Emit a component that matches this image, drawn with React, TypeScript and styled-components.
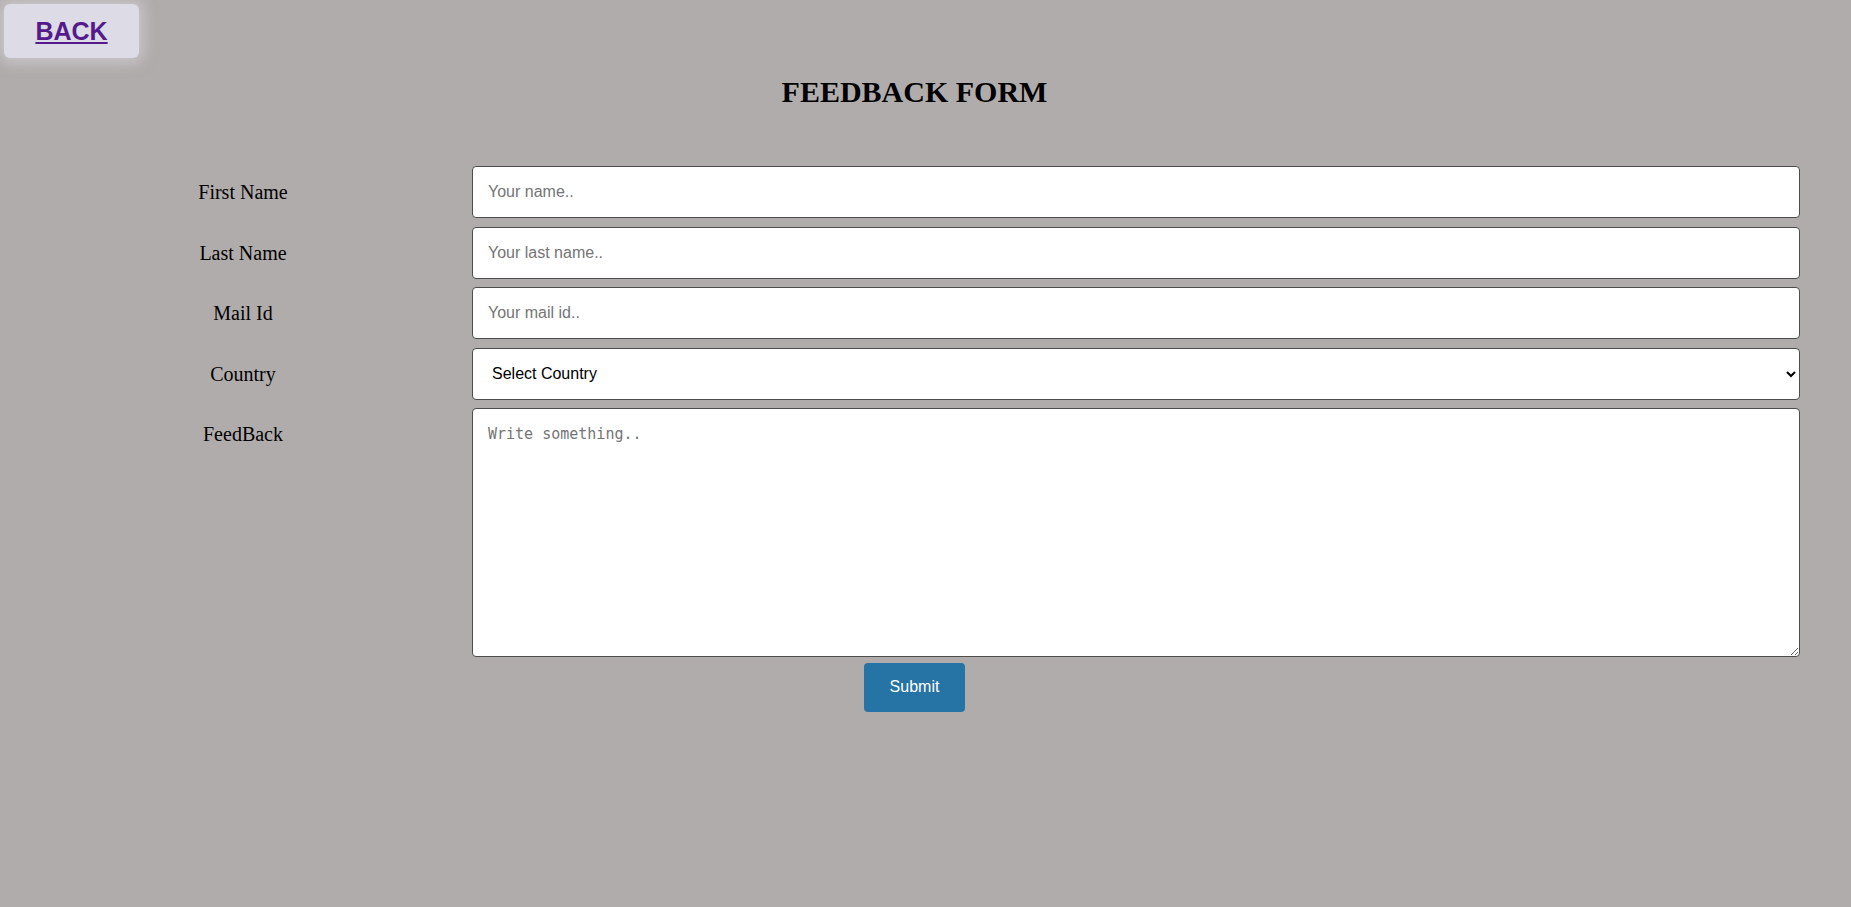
import styled, { createGlobalStyle } from 'styled-components';

const GlobalStyle = createGlobalStyle`
  html {
    overflow-y: scroll;
  }
  html, body {
    margin: 0;
    background: #b1acac;
  }
  body {
    font-family: "Liberation Serif", "Times New Roman", serif;
  }
  ::-webkit-scrollbar {
    width: 15px;
    background: #fff;
  }
  ::-webkit-scrollbar-track {
    background: #fff;
  }
  ::-webkit-scrollbar-thumb {
    background: #8b8b8b;
    border: 2px solid #fff;
    border-right-width: 1px;
    border-radius: 8px;
  }
  ::-webkit-scrollbar-button:single-button:vertical:decrement {
    height: 19px;
    background-color: #fff;
    background-image: conic-gradient(from 146deg at 50% 0, #8b8b8b 68deg, transparent 0);
    background-size: 11px 8px;
    background-position: 6px 5px;
    background-repeat: no-repeat;
  }
`;

const Page = styled.div`
  min-height: 912px;
  background: #b1acac;
  overflow: hidden;
`;

const BackButton = styled.div`
  margin: 4px 0 0 4px;
  width: 135px;
  height: 54px;
  display: flex;
  align-items: center;
  justify-content: center;
  background: #dcdbe6;
  border-radius: 6px;
  box-shadow: 0 0 14px 4px rgba(225, 222, 230, 0.55);
`;

const BackLink = styled.a`
  font-family: "Liberation Sans", Arial, sans-serif;
  font-size: 25px;
  font-weight: bold;
  color: #551a8b;
  text-decoration: underline;
  cursor: pointer;
`;

const Container = styled.div`
  margin-left: 14px;
  width: 1801px;
`;

const Title = styled.h1`
  margin: 17px 0 57px;
  font-size: 30px;
  line-height: 34px;
  font-weight: bold;
  text-align: center;
  color: #000;
`;

const FormGrid = styled.form`
  display: grid;
  grid-template-columns: 458px 1328px;
  row-gap: 8.6px;
  align-items: start;
`;

const Label = styled.label`
  padding-top: 15px;
  font-size: 20px;
  line-height: 23px;
  text-align: center;
  color: #000;
`;

const fieldBase = `
  box-sizing: border-box;
  width: 100%;
  margin: 0;
  border: 1px solid #4d4d4d;
  border-radius: 4px;
  background: #fff;
  color: #000;
`;

const TextInput = styled.input`
  ${fieldBase}
  height: 52px;
  padding: 0 15px;
  font-family: "Liberation Sans", Arial, sans-serif;
  font-size: 16px;
  &::placeholder {
    color: #757575;
  }
`;

const Select = styled.select`
  ${fieldBase}
  height: 52px;
  padding: 0 15px;
  font-family: "Liberation Sans", Arial, sans-serif;
  font-size: 16px;
`;

const TextArea = styled.textarea`
  ${fieldBase}
  display: block;
  height: 249px;
  padding: 16px 15px 15px;
  font-family: "DejaVu Sans Mono", monospace;
  font-size: 15px;
  resize: vertical;
  &::placeholder {
    color: #757575;
  }
`;

const Actions = styled.div`
  display: flex;
  justify-content: center;
  margin-top: 5.5px;
`;

const SubmitButton = styled.button`
  width: 101px;
  height: 49px;
  border: none;
  border-radius: 4px;
  background: #2574a5;
  color: #fff;
  font-family: "Liberation Sans", Arial, sans-serif;
  font-size: 16px;
  cursor: pointer;
`;

const fields = [
  { label: 'First Name', placeholder: 'Your name..' },
  { label: 'Last Name', placeholder: 'Your last name..' },
  { label: 'Mail Id', placeholder: 'Your mail id..' },
];

export default function App() {
  return (
    <Page>
      <GlobalStyle />
      <BackButton>
        <BackLink>BACK</BackLink>
      </BackButton>
      <Container>
        <Title>FEEDBACK FORM</Title>
        <FormGrid onSubmit={(e) => e.preventDefault()}>
          {fields.map((f) => (
            <>
              <Label key={f.label + '-l'}>{f.label}</Label>
              <TextInput key={f.label + '-i'} type="text" placeholder={f.placeholder} />
            </>
          ))}
          <Label>Country</Label>
          <Select defaultValue="">
            <option value="">Select Country</option>
            <option value="india">India</option>
            <option value="usa">USA</option>
            <option value="uk">UK</option>
          </Select>
          <Label>FeedBack</Label>
          <TextArea placeholder="Write something.." />
        </FormGrid>
        <Actions>
          <SubmitButton type="submit">Submit</SubmitButton>
        </Actions>
      </Container>
    </Page>
  );
}
